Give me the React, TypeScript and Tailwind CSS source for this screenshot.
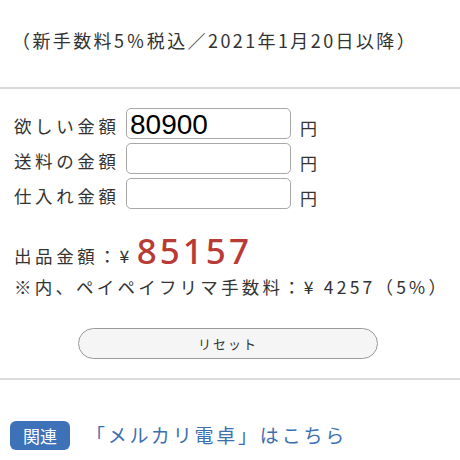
import { useState } from 'react';

const font = { fontFamily: '"Noto Sans CJK JP", "Noto Sans", sans-serif' };

function AmountRow({ label, value, onChange }: { label: string; value: string; onChange: (v: string) => void }) {
  return (
    <div className="flex items-end h-[31px]">
      <span className="w-[112px] text-[17.5px] leading-[26px] tracking-[3.6px] text-[#333]">{label}</span>
      <input
        type="text"
        value={value}
        onChange={(e) => onChange(e.target.value)}
        className="w-[165px] h-[31px] rounded-[5px] border border-[#a8a8a8] bg-white pl-[3px] pt-[3px] text-[28px] leading-[28px] text-black outline-none"
        style={{ fontFamily: '"Liberation Sans", Arial, sans-serif' }}
      />
      <span className="ml-[9px] text-[17px] leading-[22px] text-[#333]">円</span>
    </div>
  );
}

export default function App() {
  const [want, setWant] = useState('80900');
  const [ship, setShip] = useState('');
  const [cost, setCost] = useState('');

  const price = 85157;
  const fee = 4257;

  return (
    <div className="w-[460px] h-[460px] overflow-hidden bg-white text-[#333]" style={font}>
      <div className="h-[87px] pl-[12px] pt-[26px] text-[18px] leading-[28px] tracking-[2.4px]">
        （新手数料5％税込／2021年1月20日以降）
      </div>
      <div className="h-[2px] bg-[#d9d9d9]" />

      <div className="pl-[14px] pt-[19px] flex flex-col gap-[4px]">
        <AmountRow label="欲しい金額" value={want} onChange={setWant} />
        <AmountRow label="送料の金額" value={ship} onChange={setShip} />
        <AmountRow label="仕入れ金額" value={cost} onChange={setCost} />
      </div>

      <div className="pl-[14px] pt-[26px]">
        <div className="flex items-end h-[34px]">
          <span className="text-[17.5px] leading-[26px] tracking-[3.6px]">出品金額：¥</span>
          <span
            className="ml-[4px] text-[35px] leading-[36px] font-medium tracking-[3px] text-[#b83b36]"
            style={{ fontFamily: '"Noto Sans", sans-serif' }}
          >
            {price}
          </span>
        </div>
        <div className="mt-[5px] text-[17.5px] leading-[26px] tracking-[3.2px]">
          ※内、ペイペイフリマ手数料：¥ {fee}（5%）
        </div>
      </div>

      <div className="flex justify-center pt-[28px] pr-[4px]">
        <button
          type="button"
          onClick={() => {
            setWant('');
            setShip('');
            setCost('');
          }}
          className="w-[300px] h-[31px] rounded-full border border-[#9a9a9a] bg-[#f5f5f5] text-[13px] tracking-[2px] text-[#333]"
        >
          リセット
        </button>
      </div>

      <div className="mt-[19px] h-[2px] bg-[#dcdcdc]" />

      <div className="flex items-center pl-[10px] pt-[41px]">
        <span className="flex h-[29px] w-[60px] items-center justify-center rounded-[6px] bg-[#3d72b8] text-[17px] text-white">
          関連
        </span>
        <a href="#" className="ml-[16px] text-[19px] tracking-[2.8px] text-[#3b6fb0]">
          「メルカリ電卓」はこちら
        </a>
      </div>
    </div>
  );
}
